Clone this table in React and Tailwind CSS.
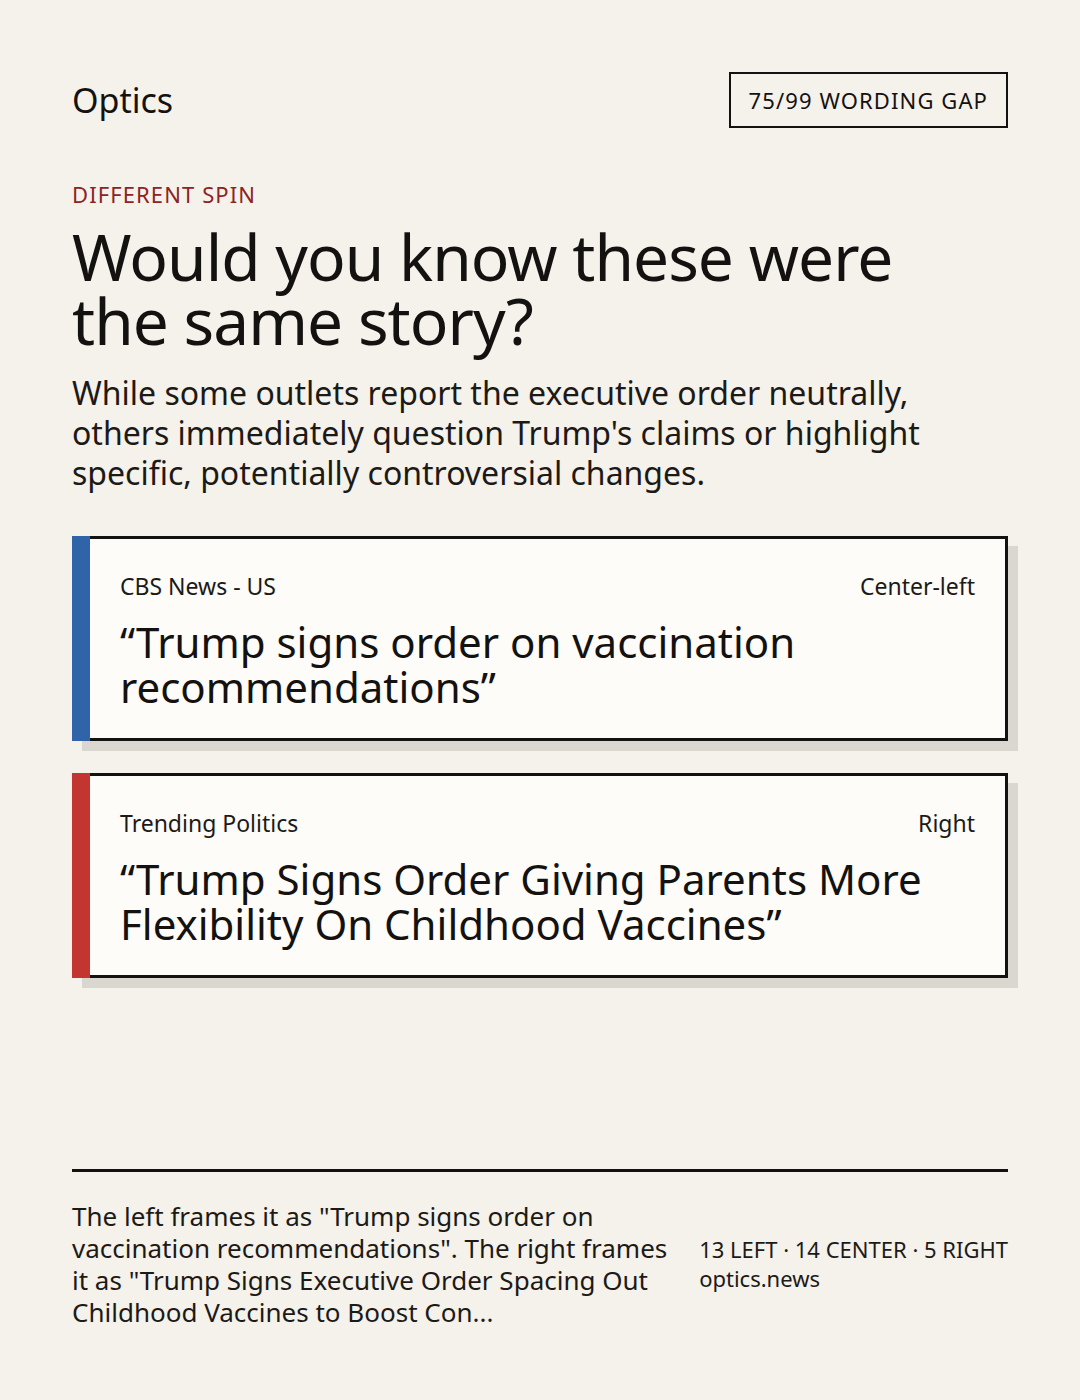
import React from 'react';

const cards = [
  {
    source: 'CBS News - US',
    lean: 'Center-left',
    headline: '\u201cTrump signs order on vaccination recommendations\u201d',
    bar: 'bg-[#2f65a8]',
  },
  {
    source: 'Trending Politics',
    lean: 'Right',
    headline: '\u201cTrump Signs Order Giving Parents More Flexibility On Childhood Vaccines\u201d',
    bar: 'bg-[#c23530]',
  },
];

function HeadlineCard({ card }) {
  return (
    <div className="flex shadow-[10px_10px_0_#dad7d0]">
      <div className={`w-[18px] shrink-0 ${card.bar}`} />
      <div className="flex-1 bg-[#fdfcf8] border-[3px] border-l-0 border-[#141210] pl-[30px] pr-[30px] pt-[32px] pb-[29px]">
        <div className="flex justify-between text-[23px] leading-[30px] text-[#1c1a17]">
          <span>{card.source}</span>
          <span>{card.lean}</span>
        </div>
        <p className="mt-[18px] text-[42px] leading-[45px] text-[#141210]">{card.headline}</p>
      </div>
    </div>
  );
}

export default function App() {
  return (
    <div className="min-h-screen bg-[#f5f1eb] p-[72px] flex flex-col text-[#141210] font-['Noto_Sans',sans-serif]">
      <header className="flex items-center justify-between">
        <span className="text-[34px] leading-[40px]">Optics</span>
        <span className="border-2 border-[#141210] px-[18px] py-[11px] text-[22px] leading-[30px] tracking-[0.05em]">
          75/99 WORDING GAP
        </span>
      </header>

      <p className="mt-[51px] text-[22px] leading-[30px] tracking-[0.05em] text-[#8e2323]">DIFFERENT SPIN</p>
      <h1 className="mt-[16px] text-[64px] leading-[64px] tracking-[-0.015em] max-w-[880px]">
        Would you know these were the same story?
      </h1>
      <p className="mt-[20px] text-[32px] leading-[40px] text-[#1c1a17]">
        While some outlets report the executive order neutrally, others immediately question Trump's claims or highlight specific, potentially controversial changes.
      </p>

      <div className="mt-[43px] flex flex-col gap-[32px]">
        {cards.map((card) => (
          <HeadlineCard key={card.source} card={card} />
        ))}
      </div>

      <footer className="mt-auto border-t-[3px] border-[#141210] pt-[28px] flex items-center justify-between gap-[28px]">
        <p className="w-[600px] text-[26px] leading-[32px] text-[#1c1a17]">
          The left frames it as "Trump signs order on vaccination recommendations". The right frames it as "Trump Signs Executive Order Spacing Out Childhood Vaccines to Boost Con...
        </p>
        <div className="text-[22px] leading-[29px] text-[#1c1a17] whitespace-nowrap">
          <div>13 LEFT · 14 CENTER · 5 RIGHT</div>
          <div>optics.news</div>
        </div>
      </footer>
    </div>
  );
}
